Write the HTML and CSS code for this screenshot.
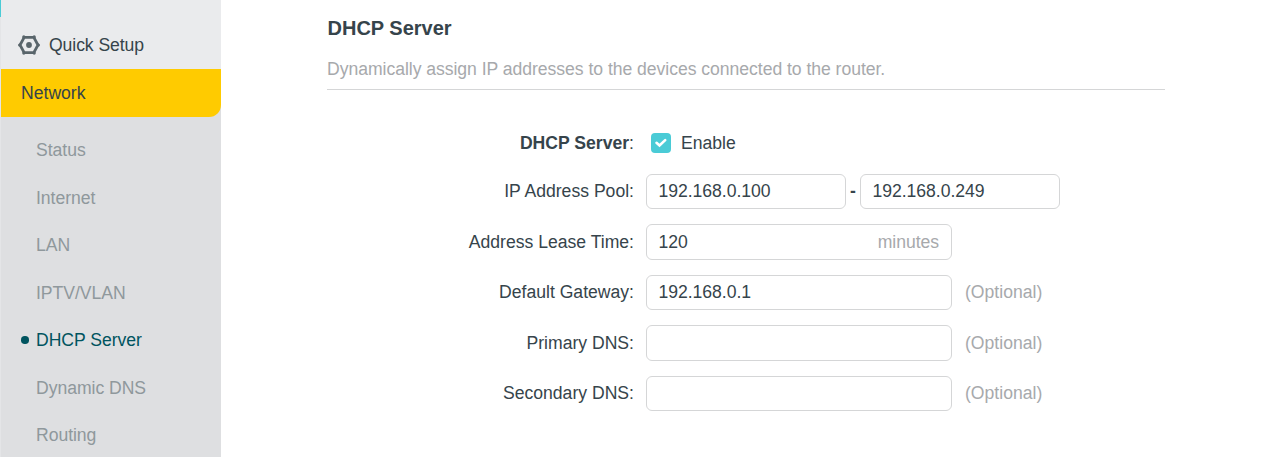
FILE: index.html
```html
<!DOCTYPE html>
<html lang="en">
<head>
<meta charset="utf-8">
<title>DHCP Server</title>
<link rel="stylesheet" href="styles.css">
</head>
<body>
<div class="page">
  <div class="edge"></div>
  <nav class="sidebar">
    <div class="quick">
      <svg class="gear" viewBox="0 0 22 20" width="22" height="20">
        <path d="M6.2 2.4h9.6l4.2 7.6-4.2 7.6H6.2L2 10z" fill="none" stroke="#59656b" stroke-width="2.8"/>
        <g fill="#59656b"><circle cx="5.8" cy="1.9" r="1.6"/><circle cx="16.2" cy="1.9" r="1.6"/><circle cx="20.4" cy="10" r="1.5"/><circle cx="16.2" cy="18.1" r="1.6"/><circle cx="5.8" cy="18.1" r="1.6"/><circle cx="1.6" cy="10" r="1.5"/><circle cx="11" cy="10" r="2.9"/></g>
      </svg>
      <span>Quick Setup</span>
    </div>
    <div class="network">Network</div>
    <ul class="menu">
      <li>Status</li>
      <li>Internet</li>
      <li>LAN</li>
      <li>IPTV/VLAN</li>
      <li class="active">DHCP Server</li>
      <li>Dynamic DNS</li>
      <li>Routing</li>
    </ul>
  </nav>
  <main class="content">
    <h1 class="title">DHCP Server</h1>
    <p class="description">Dynamically assign IP addresses to the devices connected to the router.</p>
    <form class="form">
      <div class="row row-enable">
        <span class="label"><b>DHCP Server</b>:</span>
        <span class="check"><svg viewBox="0 0 20 20" width="20" height="20"><path d="M5.5 9.8l3 2.7 5.7-5.4" fill="none" stroke="#fff" stroke-width="2.6" stroke-linecap="round"/></svg></span>
        <span>Enable</span>
      </div>
      <div class="row">
        <span class="label">IP Address Pool:</span>
        <div class="field short"><span>192.168.0.100</span></div>
        <span class="dash">-</span>
        <div class="field short"><span>192.168.0.249</span></div>
      </div>
      <div class="row">
        <span class="label">Address Lease Time:</span>
        <div class="field"><span>120</span><span class="hint">minutes</span></div>
      </div>
      <div class="row">
        <span class="label">Default Gateway:</span>
        <div class="field"><span>192.168.0.1</span></div>
        <span class="optional">(Optional)</span>
      </div>
      <div class="row">
        <span class="label">Primary DNS:</span>
        <div class="field"></div>
        <span class="optional">(Optional)</span>
      </div>
      <div class="row">
        <span class="label">Secondary DNS:</span>
        <div class="field"></div>
        <span class="optional">(Optional)</span>
      </div>
    </form>
  </main>
</div>
</body>
</html>
```

FILE: styles.css
```css
* { box-sizing: border-box; }
body {
  margin: 0;
  background: #fff;
  color: #36444b;
  font: 17.6px/20px "Liberation Sans", Arial, sans-serif;
  overflow: hidden;
}
.page { display: flex; height: 457px; }
.edge { width: 1px; background: linear-gradient(#4acbd6 17px, #e4e5e7 17px); }
.sidebar { width: 220px; background: #dedfe1; }
.quick {
  display: flex;
  gap: 9px;
  height: 69px;
  padding: 35px 0 0 17px;
  background: #eaebed;
  letter-spacing: -0.08px;
}
.gear { display: block; }
.network {
  height: 48px;
  padding: 14px 20px;
  background: #ffcb00;
  border-bottom-right-radius: 12px;
}
.menu { margin: 0; padding: 9.3px 0 0; list-style: none; color: #8f989c; letter-spacing: -0.04px; }
.menu li { display: flex; align-items: center; height: 47.5px; padding-left: 35px; }
.menu .active { padding-left: 20px; color: #00545f; }
.active::before {
  content: "";
  width: 7.5px;
  height: 7.5px;
  margin-right: 7.5px;
  border-radius: 50%;
  background: #00545f;
}
.content { width: 838px; margin-left: 106px; }
.title { margin: 18px 0 0; font-size: 20px; line-height: 20px; text-indent: 0.5px; }
.description {
  height: 31px;
  margin: 21px 0 0;
  border-bottom: 1px solid #d5d6d7;
  color: #a7a9ac;
  letter-spacing: -0.04px;
}
.form { display: flex; flex-direction: column; gap: 15.3px; padding-top: 35.4px; }
.row { display: flex; align-items: center; height: 35.2px; }
.row-enable { margin-bottom: -2px; }
.label { width: 307px; margin-right: 12px; text-align: right; }
.field {
  display: flex;
  align-items: center;
  justify-content: space-between;
  width: 306px;
  height: 35.2px;
  padding: 0 12px 0 11.5px;
  border: 1px solid #d5d6d7;
  border-radius: 6px;
  letter-spacing: -0.04px;
}
.short { width: 200px; }
.dash { width: 14px; text-align: center; font-weight: bold; }
.hint, .optional { color: #a7a9ac; }
.optional { margin-left: 13px; }
.check {
  width: 20px;
  height: 20px;
  margin: 0 10px 0 5px;
  border-radius: 4px;
  background: #4acbd6;
}
.check svg { display: block; }
```
